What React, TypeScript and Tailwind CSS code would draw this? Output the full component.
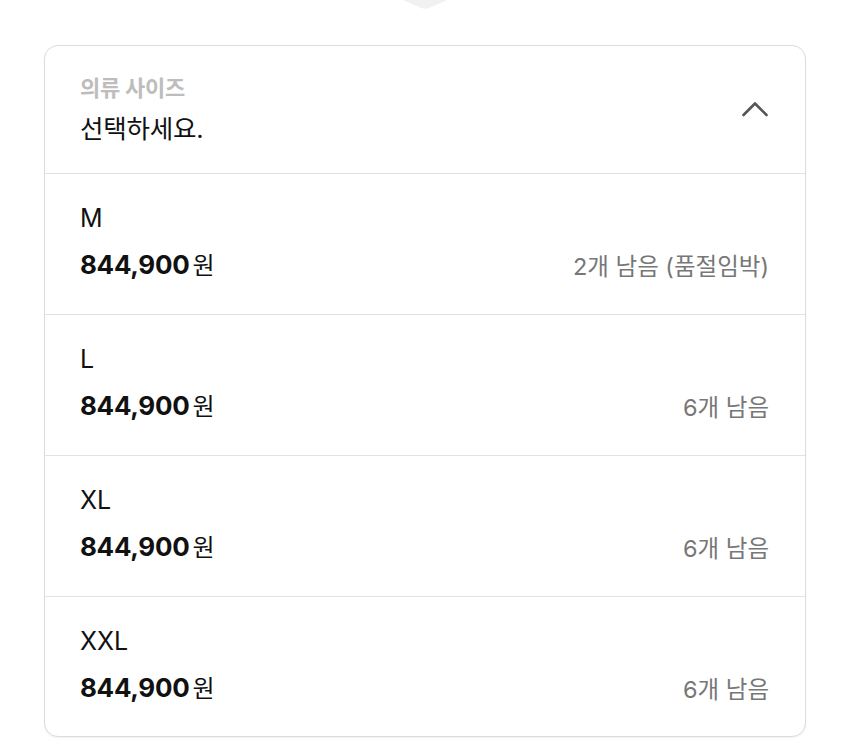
const options = [
  { size: "M", price: "844,900", stock: "2개 남음 (품절임박)" },
  { size: "L", price: "844,900", stock: "6개 남음" },
  { size: "XL", price: "844,900", stock: "6개 남음" },
  { size: "XXL", price: "844,900", stock: "6개 남음" },
]

export default function App() {
  return (
    <div
      className="relative w-[850px] h-[741px] bg-white overflow-hidden"
      style={{ fontFamily: 'Inter, "Noto Sans CJK KR", sans-serif' }}
    >
      {/* faded tip of the tooltip above */}
      <svg className="absolute left-[400px] top-0" width="50" height="10" viewBox="0 0 50 10">
        <path d="M3 0 H47 L29 8 Q25 9.5 21 8 Z" fill="#f1f1f1" />
      </svg>

      <div className="absolute left-[44px] top-[45px] w-[762px] h-[692px] rounded-[14px] border border-[#dcdcdc] shadow-[0_1px_2px_rgba(0,0,0,0.06)] bg-white overflow-hidden">
        <div className="h-[128px] border-b border-[#e2e2e2] flex items-start justify-between pl-[35px] pr-[36px] pt-[29px]">
          <div className="flex flex-col">
            <span className="text-[22px] leading-[27px] font-semibold text-[#bdbdbd] tracking-[-0.3px]">의류 사이즈</span>
            <span className="text-[25.5px] leading-[32px] text-[#111] mt-[11px] tracking-[-0.2px]">선택하세요.</span>
          </div>
          <svg width="26" height="16" viewBox="0 0 26 16" className="mt-[26px] mr-[1px]">
            <path d="M1.5 14 L13 2.5 L24.5 14" fill="none" stroke="#555" strokeWidth="2.6" strokeLinecap="round" strokeLinejoin="round" />
          </svg>
        </div>

        {options.map((o, i) => (
          <div
            key={o.size}
            className={`h-[141px] flex flex-col pl-[35px] pr-[36px] pt-[28px] ${i < options.length - 1 ? "border-b border-[#e2e2e2]" : ""}`}
          >
            <span className="text-[25px] leading-[32px] text-[#111]">{o.size}</span>
            <div className="flex items-center justify-between mt-[13px]">
              <span className="text-[26px] leading-[34px] font-bold text-[#111] tracking-[-0.3px]">
                {o.price}
                <span className="font-normal text-[24px] ml-[3px]">원</span>
              </span>
              <span className="text-[23.5px] leading-[34px] text-[#777] mt-[3px]">{o.stock}</span>
            </div>
          </div>
        ))}
      </div>
    </div>
  )
}
